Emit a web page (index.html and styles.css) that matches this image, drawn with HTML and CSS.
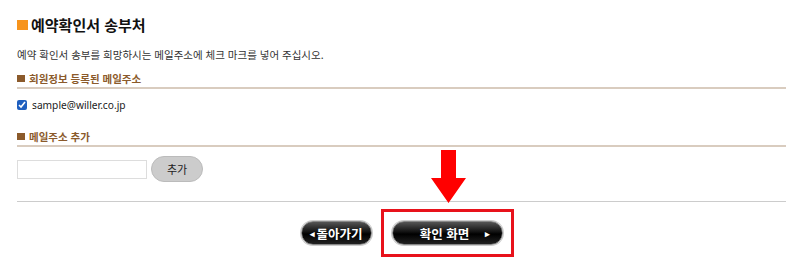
FILE: index.html
```html
<!DOCTYPE html>
<html lang="ko">
<head>
<meta charset="utf-8">
<link rel="stylesheet" href="styles.css">
</head>
<body>
<div class="page">
  <h2 class="title"><span class="sq"></span>예약확인서 송부처</h2>
  <p class="desc">예약 확인서 송부를 희망하시는 메일주소에 체크 마크를 넣어 주십시오.</p>
  <h3 class="sub"><span class="bsq"></span>회원정보 등록된 메일주소</h3>
  <label class="mail"><input type="checkbox" checked> sample@willer.co.jp</label>
  <h3 class="sub sub2"><span class="bsq"></span>메일주소 추가</h3>
  <div class="addrow">
    <input class="field" type="text">
    <button class="add">추가</button>
  </div>
  <div class="bottom">
    <div class="arrow">
      <svg width="36" height="54" viewBox="0 0 36 54"><path d="M10 0 H25 V28 H35 L17.5 53 L0 28 H10 Z" fill="#f00"/></svg>
    </div>
    <div class="btns">
      <button class="bk back"><span class="tri">&#9666;</span>돌아가기</button>
      <div class="hl">
        <button class="bk go">확인 화면<span class="tri r">&#9656;</span></button>
      </div>
    </div>
  </div>
</div>
</body>
</html>
```
FILE: styles.css
```css
* { box-sizing: border-box; }
body { margin: 0; background: #fff; font-family: "Noto Sans CJK KR", "Noto Sans", sans-serif; color: #222; }
.page { width: 786px; padding: 0 0 0 17px; }
.title { margin: 0; padding-top: 14px; height: 36px; font-size: 15px; font-weight: bold; color: #111; display: flex; align-items: center; gap: 3px; line-height: 18px; }
.sq { display: inline-block; width: 11px; height: 10px; background: #f7941d; }
.desc { margin: 11px 0 0; font-size: 10.5px; line-height: 16px; color: #333; }
.sub { margin: 8px 0 0; font-size: 10.5px; font-weight: bold; color: #8b5a2b; border-bottom: 2px solid #d9ccbf; height: 18px; line-height: 16px; display: flex; align-items: center; gap: 4px; padding-bottom: 1px; }
.bsq { display: inline-block; width: 8px; height: 7px; background: #8b5a2b; }
.mail { display: flex; align-items: center; gap: 5px; margin-top: 9px; height: 14px; font-size: 10.2px; color: #222; font-family: "Noto Sans", sans-serif; }
.mail input { margin: 0; width: 10px; height: 10px; accent-color: #1f5fbf; }
.sub2 { margin-top: 17px; }
.addrow { display: flex; align-items: center; gap: 4px; margin-top: 8px; height: 28px; }
.field { width: 130px; height: 19px; border: 1px solid #ddd; margin: 0; padding: 0; }
.add { width: 52px; height: 26px; border: 1px solid #bbb; border-radius: 13px; background: #ccc; font-family: inherit; font-size: 11px; color: #222; padding: 0; }
.bottom { position: relative; border-top: 1px solid #ccc; margin-top: 18px; width: 769px; }
.arrow { position: absolute; left: 414px; top: -52px; }
.btns { display: flex; justify-content: center; align-items: center; gap: 9px; padding-top: 7px; margin-left: 12px; }
.hl { border: 3px solid #e8121b; padding: 9px 8px; }
.bk { background: linear-gradient(#555 0%, #111 45%, #000 55%, #222 100%); color: #fff; font-family: inherit; font-weight: bold; font-size: 12.5px; height: 24px; border-radius: 12px; border: 1px solid #888; box-shadow: 0 0 0 1px #ccc; padding: 0; display: flex; align-items: center; justify-content: center; }
.back { width: 71px; gap: 1px; }
.go { width: 111px; position: relative; padding-right: 6px; }
.tri { font-size: 9px; }
.r { position: absolute; right: 12px; }
```
